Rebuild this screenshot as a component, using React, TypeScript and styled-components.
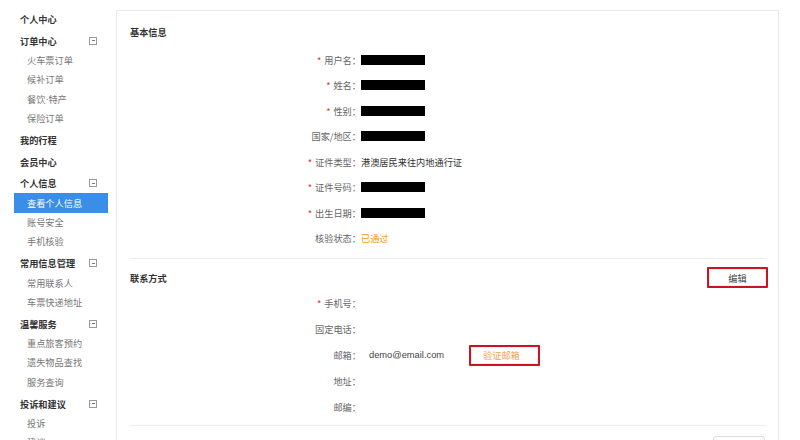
import React from "react";
import styled, { createGlobalStyle } from "styled-components";

const Global = createGlobalStyle`
  html, body { margin: 0; padding: 0; background: #fff; }
  body { font-family: "Noto Sans CJK SC", "Liberation Sans", sans-serif; color: #333; }
  * { box-sizing: border-box; }
`;

const Page = styled.div`
  display: flex;
  align-items: flex-start;
  width: 800px;
  height: 440px;
  overflow: hidden;
`;

const Sidebar = styled.nav`
  width: 116px;
  flex: none;
  padding: 6.6px 8px 0 14px;
  display: flex;
  flex-direction: column;
`;

const Heading = styled.div`
  height: 19.5px;
  margin-top: 2.4px;
  padding: 0 0 0 6px;
  display: flex;
  align-items: center;
  justify-content: space-between;
  font-size: 9.2px;
  font-weight: 700;
  color: #333;
`;

const Toggle = styled.span`
  width: 8px;
  height: 8px;
  margin-right: 11px;
  border: 1px solid #9a9a9a;
  position: relative;
  &::after {
    content: "";
    position: absolute;
    left: 1.5px;
    right: 1.5px;
    top: 2.5px;
    height: 1px;
    background: #777;
  }
`;

const SubItem = styled.div<{ $active?: boolean }>`
  height: 19.3px;
  flex: none;
  display: flex;
  align-items: center;
  padding-left: 13px;
  font-size: 9.2px;
  color: ${(p) => (p.$active ? "#fff" : "#777")};
  background: ${(p) => (p.$active ? "#3a8ee8" : "transparent")};
`;

const Dot = styled.span`
  font-family: "Liberation Sans", Arial, sans-serif;
`;

const Panel = styled.main`
  margin-top: 10px;
  width: 663px;
  height: 440px;
  border: 1px solid #e8e8e8;
  border-bottom: none;
  padding: 0 12px 0 13px;
  display: flex;
  flex-direction: column;
`;

const Section = styled.section<{ $pt: number; $pb: number }>`
  padding-top: ${(p) => p.$pt}px;
  padding-bottom: ${(p) => p.$pb}px;
  border-bottom: 1px solid #ececec;
`;

const SectionHead = styled.div<{ $h: number; $mb: number; $mt?: number }>`
  height: ${(p) => p.$h}px;
  margin-top: ${(p) => p.$mt ?? 0}px;
  margin-bottom: ${(p) => p.$mb}px;
  display: flex;
  align-items: center;
  justify-content: space-between;
`;

const Title = styled.h3`
  margin: 0;
  font-size: 9.2px;
  font-weight: 700;
  color: #333;
`;

const Row = styled.div<{ $h: number }>`
  height: ${(p) => p.$h}px;
  display: grid;
  grid-template-columns: 231px auto;
  align-items: center;
`;

const Label = styled.div`
  text-align: right;
  font-size: 9.2px;
  color: #666;
`;

const Star = styled.span`
  color: #e0322b;
  margin-right: 3px;
`;

const Value = styled.div`
  display: flex;
  align-items: center;
  font-size: 9.2px;
  color: #333;
`;

const Redacted = styled.span`
  display: inline-block;
  width: 64px;
  height: 10px;
  background: #000;
`;

const Passed = styled.span`
  color: #f39a1e;
`;

const Email = styled.span`
  font-family: "Liberation Sans", Arial, sans-serif;
  font-size: 9.3px;
  color: #444;
  margin-left: 8px;
`;

const RedBox = styled.button<{ $w: number; $orange?: boolean; $center?: boolean }>`
  width: ${(p) => p.$w}px;
  height: 21px;
  border: 2.5px solid #c8151f;
  border-radius: 1px;
  background: #fff;
  font-family: "Noto Sans CJK SC", sans-serif;
  font-size: 9.2px;
  color: ${(p) => (p.$orange ? "#f3a253" : "#444")};
  padding: 0 0 0 ${(p) => (p.$center ? 0 : 12)}px;
  text-align: ${(p) => (p.$center ? "center" : "left")};
  box-shadow: inset 0 0 0 1px #eee;
`;

const EditBtn = styled(RedBox)`
  margin-right: -2px;
`;

const VerifyBtn = styled(RedBox)`
  margin-left: 25px;
`;

const GhostBtn = styled.div`
  width: 52px;
  height: 20px;
  border: 1px solid #ddd;
  border-radius: 3px;
  margin-left: auto;
  margin-right: 1px;
`;

type Field = { label: string; req?: boolean; value: React.ReactNode };

const basic: Field[] = [
  { label: "用户名", req: true, value: <Redacted /> },
  { label: "姓名", req: true, value: <Redacted /> },
  { label: "性别", req: true, value: <Redacted /> },
  { label: "国家/地区", value: <Redacted /> },
  { label: "证件类型", req: true, value: "港澳居民来往内地通行证" },
  { label: "证件号码", req: true, value: <Redacted /> },
  { label: "出生日期", req: true, value: <Redacted /> },
  { label: "核验状态", value: <Passed>已通过</Passed> },
];

const contact: Field[] = [
  { label: "手机号", req: true, value: null },
  { label: "固定电话", value: null },
  {
    label: "邮箱",
    value: (
      <>
        <Email>demo@email.com</Email>
        <VerifyBtn $w={71} $orange>验证邮箱</VerifyBtn>
      </>
    ),
  },
  { label: "地址", value: null },
  { label: "邮编", value: null },
];

const menu: { title: string; items?: string[]; toggle?: boolean }[] = [
  { title: "个人中心" },
  { title: "订单中心", toggle: true, items: ["火车票订单", "候补订单", "餐饮·特产", "保险订单"] },
  { title: "我的行程" },
  { title: "会员中心" },
  { title: "个人信息", toggle: true, items: ["查看个人信息", "账号安全", "手机核验"] },
  { title: "常用信息管理", toggle: true, items: ["常用联系人", "车票快递地址"] },
  { title: "温馨服务", toggle: true, items: ["重点旅客预约", "遗失物品查找", "服务查询"] },
  { title: "投诉和建议", toggle: true, items: ["投诉", "建议"] },
];

const renderItemText = (t: string) => {
  const parts = t.split("·");
  if (parts.length === 1) return t;
  return (
    <>
      {parts[0]}
      <Dot>·</Dot>
      {parts[1]}
    </>
  );
};

const renderRows = (fields: Field[], h: number) =>
  fields.map((f) => (
    <Row key={f.label} $h={h}>
      <Label>
        {f.req && <Star>*</Star>}
        {f.label}：
      </Label>
      <Value>{f.value}</Value>
    </Row>
  ));

export default function App() {
  return (
    <>
      <Global />
      <Page>
        <Sidebar>
          {menu.map((g) => (
            <React.Fragment key={g.title}>
              <Heading>
                {g.title}
                {g.toggle && <Toggle />}
              </Heading>
              {g.items?.map((it) => (
                <SubItem key={it} $active={it === "查看个人信息"}>
                  {renderItemText(it)}
                </SubItem>
              ))}
            </React.Fragment>
          ))}
        </Sidebar>
        <Panel>
          <Section $pt={11} $pb={7}>
            <SectionHead $h={20} $mb={5}>
              <Title>基本信息</Title>
            </SectionHead>
            {renderRows(basic, 25.5)}
          </Section>
          <Section $pt={8} $pb={5}>
            <SectionHead $h={21} $mb={2}>
              <Title>联系方式</Title>
              <EditBtn $w={61} $center>编辑</EditBtn>
            </SectionHead>
            {renderRows(contact, 26)}
          </Section>
          <SectionHead $h={20} $mb={0} $mt={10}>
            <GhostBtn />
          </SectionHead>
        </Panel>
      </Page>
    </>
  );
}
